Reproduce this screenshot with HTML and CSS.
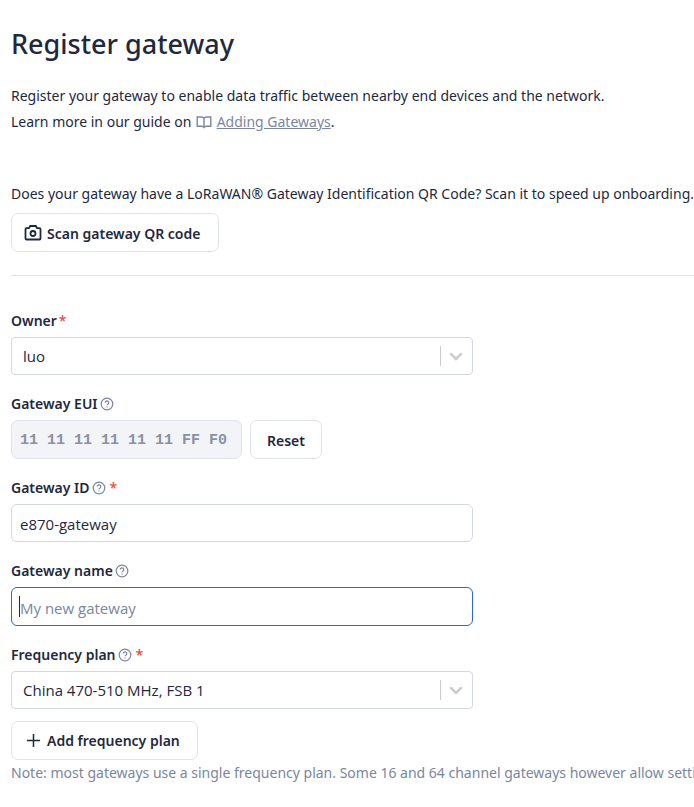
FILE: index.html
```html
<!DOCTYPE html>
<html lang="en">
<head>
  <meta charset="UTF-8">
  <meta name="viewport" content="width=device-width, initial-scale=1.0">
  <title>Register gateway</title>
  <link rel="stylesheet" href="styles.css">
</head>
<body>
  <svg class="sprite" aria-hidden="true">
    <symbol id="icon-help" viewBox="0 0 14 14">
      <circle cx="7" cy="7" r="5.8"></circle>
      <path d="M5.2 5.6a1.8 1.8 0 1 1 2.6 1.6c-.6.3-.8.6-.8 1.1M7 9.6v1"></path>
    </symbol>
    <symbol id="icon-chevron" viewBox="0 0 20 20">
      <path d="M5 8l5 5 5-5"></path>
    </symbol>
  </svg>

  <main class="page">
    <h1>Register gateway</h1>
    <p class="intro">
      Register your gateway to enable data traffic between nearby end devices and the network.<br>
      Learn more in our guide on
      <svg class="icon-book" viewBox="0 0 16 16"><path d="M8 4.200C7.400 3.300 6.500 3 5.500 3H1.200v9.200h4.600c1 0 1.700.4 2.200 1.200.5-.8 1.200-1.200 2.200-1.200h4.600V3h-4.300C9.500 3 8.600 3.300 8 4.200zM8 4.200v9"></path></svg>
      <a href="#">Adding Gateways</a>.
    </p>

    <p class="scan-text">Does your gateway have a LoRaWAN® Gateway Identification QR Code? Scan it to speed up onboarding.</p>
    <button type="button" class="btn btn-scan">
      <svg class="icon-camera" viewBox="0 0 18 18"><path d="M1.500 5.200q0-1 1-1h2.400l1.300-2.200h5.600l1.300 2.200h2.400q1 0 1 1v9.300q0 1-1 1h-13q-1 0-1-1z"></path><circle cx="9" cy="9.500" r="2.500"></circle></svg>
      Scan gateway QR code
    </button>

    <hr>

    <form>
      <div class="field">
        <div class="label-row">
          <label for="owner">Owner</label><span class="required">*</span>
        </div>
        <div class="select">
          <select id="owner">
            <option>luo</option>
          </select>
          <span class="arrow"><svg><use href="#icon-chevron"></use></svg></span>
        </div>
      </div>

      <div class="field">
        <div class="label-row">
          <label for="eui">Gateway EUI</label><svg class="icon-help"><use href="#icon-help"></use></svg>
        </div>
        <div class="eui-row">
          <input type="text" id="eui" class="eui" value="11 11 11 11 11 11 FF F0" disabled>
          <button type="button" class="btn">Reset</button>
        </div>
      </div>

      <div class="field">
        <div class="label-row">
          <label for="gateway-id">Gateway ID</label><svg class="icon-help"><use href="#icon-help"></use></svg><span class="required">*</span>
        </div>
        <input type="text" id="gateway-id" value="e870-gateway">
      </div>

      <div class="field">
        <div class="label-row">
          <label for="gateway-name">Gateway name</label><svg class="icon-help"><use href="#icon-help"></use></svg>
        </div>
        <div class="name-input">
          <input type="text" id="gateway-name" placeholder="My new gateway" autofocus>
        </div>
      </div>

      <div class="field field-plan">
        <div class="label-row">
          <label for="plan">Frequency plan</label><svg class="icon-help"><use href="#icon-help"></use></svg><span class="required">*</span>
        </div>
        <div class="select">
          <select id="plan">
            <option>China 470-510 MHz, FSB 1</option>
          </select>
          <span class="arrow"><svg><use href="#icon-chevron"></use></svg></span>
        </div>
      </div>

      <button type="button" class="btn btn-add">
        <svg class="icon-plus" viewBox="0 0 16 16"><path d="M8 1v14M1 8h14"></path></svg>
        Add frequency plan
      </button>
      <p class="note">Note: most gateways use a single frequency plan. Some 16 and 64 channel gateways however allow setting multiple.</p>
    </form>
  </main>
</body>
</html>
```

FILE: styles.css
```css
* {
  box-sizing: border-box;
}
body {
  margin: 0;
  font-family: "Noto Sans", "Open Sans", sans-serif;
  font-size: 14px;
  line-height: 26px;
  color: #1e293e;
  background: #fff;
}
.sprite {
  display: none;
}
svg {
  fill: none;
  stroke: currentColor;
}
.page {
  padding: 24px 0 16px 11px;
  overflow: hidden;
}
h1 {
  margin: 0 0 19px;
  font-size: 27px;
  font-weight: 500;
  line-height: 40px;
}
p {
  margin: 0;
}
.intro a {
  color: #7a869f;
  text-decoration: underline;
}
.icon-book {
  width: 16px;
  height: 16px;
  margin: 0 1px;
  vertical-align: -3px;
  color: #7a869f;
  stroke-width: 1.4;
}
.scan-text {
  margin: 46px 0 6px;
  white-space: nowrap;
}
.btn {
  display: flex;
  align-items: center;
  height: 39px;
  padding: 2px 16px 0;
  font-family: inherit;
  font-size: 14px;
  font-weight: 600;
  color: #1e293e;
  background: #fff;
  border: 1px solid #dfe3eb;
  border-radius: 7px;
  cursor: pointer;
}
.btn-scan {
  gap: 5px;
  padding: 1px 18px 0 12px;
}
.icon-camera {
  width: 18px;
  height: 18px;
  stroke-width: 1.8;
}
hr {
  height: 1px;
  margin: 23px 0 33px;
  border: 0;
  background: #dfe3eb;
}
.field {
  margin-bottom: 17px;
}
.label-row {
  display: flex;
  align-items: center;
  height: 28px;
  padding-bottom: 4px;
  font-weight: 600;
}
.icon-help {
  width: 14px;
  height: 14px;
  margin-left: 2px;
  color: #7a869f;
  stroke-width: 1.2;
}
.required {
  margin-left: 2px;
  font-weight: 400;
  color: #f0372b;
}
.icon-help + .required {
  margin-left: 4px;
}
input,
select {
  display: block;
  width: 100%;
  max-width: 462px;
  height: 38px;
  padding: 2px 8px 0;
  font-family: "Open Sans", "Noto Sans", sans-serif;
  font-size: 15px;
  color: #1e293e;
  background: #fff;
  border: 1px solid #d3d7e0;
  border-radius: 6px;
  outline: none;
}
input::placeholder {
  color: #7a869f;
}
input:focus {
  border-color: #2c62e6;
  caret-color: transparent;
}
.name-input {
  position: relative;
}
.name-input input {
  height: 39px;
}
/* steady text cursor */
.name-input:focus-within::before {
  content: "";
  position: absolute;
  top: 9px;
  left: 8px;
  width: 1px;
  height: 21px;
  background: #1e293e;
}
.select {
  position: relative;
  max-width: 462px;
}
select {
  appearance: none;
  padding: 0 48px 0 11px;
  border-radius: 4px;
}
.arrow {
  position: absolute;
  top: 9px;
  right: 0;
  display: flex;
  align-items: center;
  width: 33px;
  height: 20px;
  padding-left: 5px;
  color: #ccc;
  border-left: 1px solid #ccc;
  pointer-events: none;
}
.arrow svg {
  width: 20px;
  height: 20px;
  stroke-width: 2.5;
  stroke-linecap: round;
}
.eui-row {
  display: flex;
  gap: 8px;
}
.eui {
  width: 231px;
  height: 39px;
  font-family: "Liberation Mono", monospace;
  font-size: 15px;
  font-weight: 700;
  color: #8a92a0;
  background: #f3f4f8;
  border-color: #dfe3eb;
  border-radius: 7px;
}
.field-plan {
  margin-bottom: 12px;
}
.btn-add {
  gap: 6px;
  padding: 0 17px 0 14px;
}
.icon-plus {
  width: 15px;
  height: 15px;
  stroke-width: 1.6;
}
.note {
  color: #7a869f;
  white-space: nowrap;
}
```
